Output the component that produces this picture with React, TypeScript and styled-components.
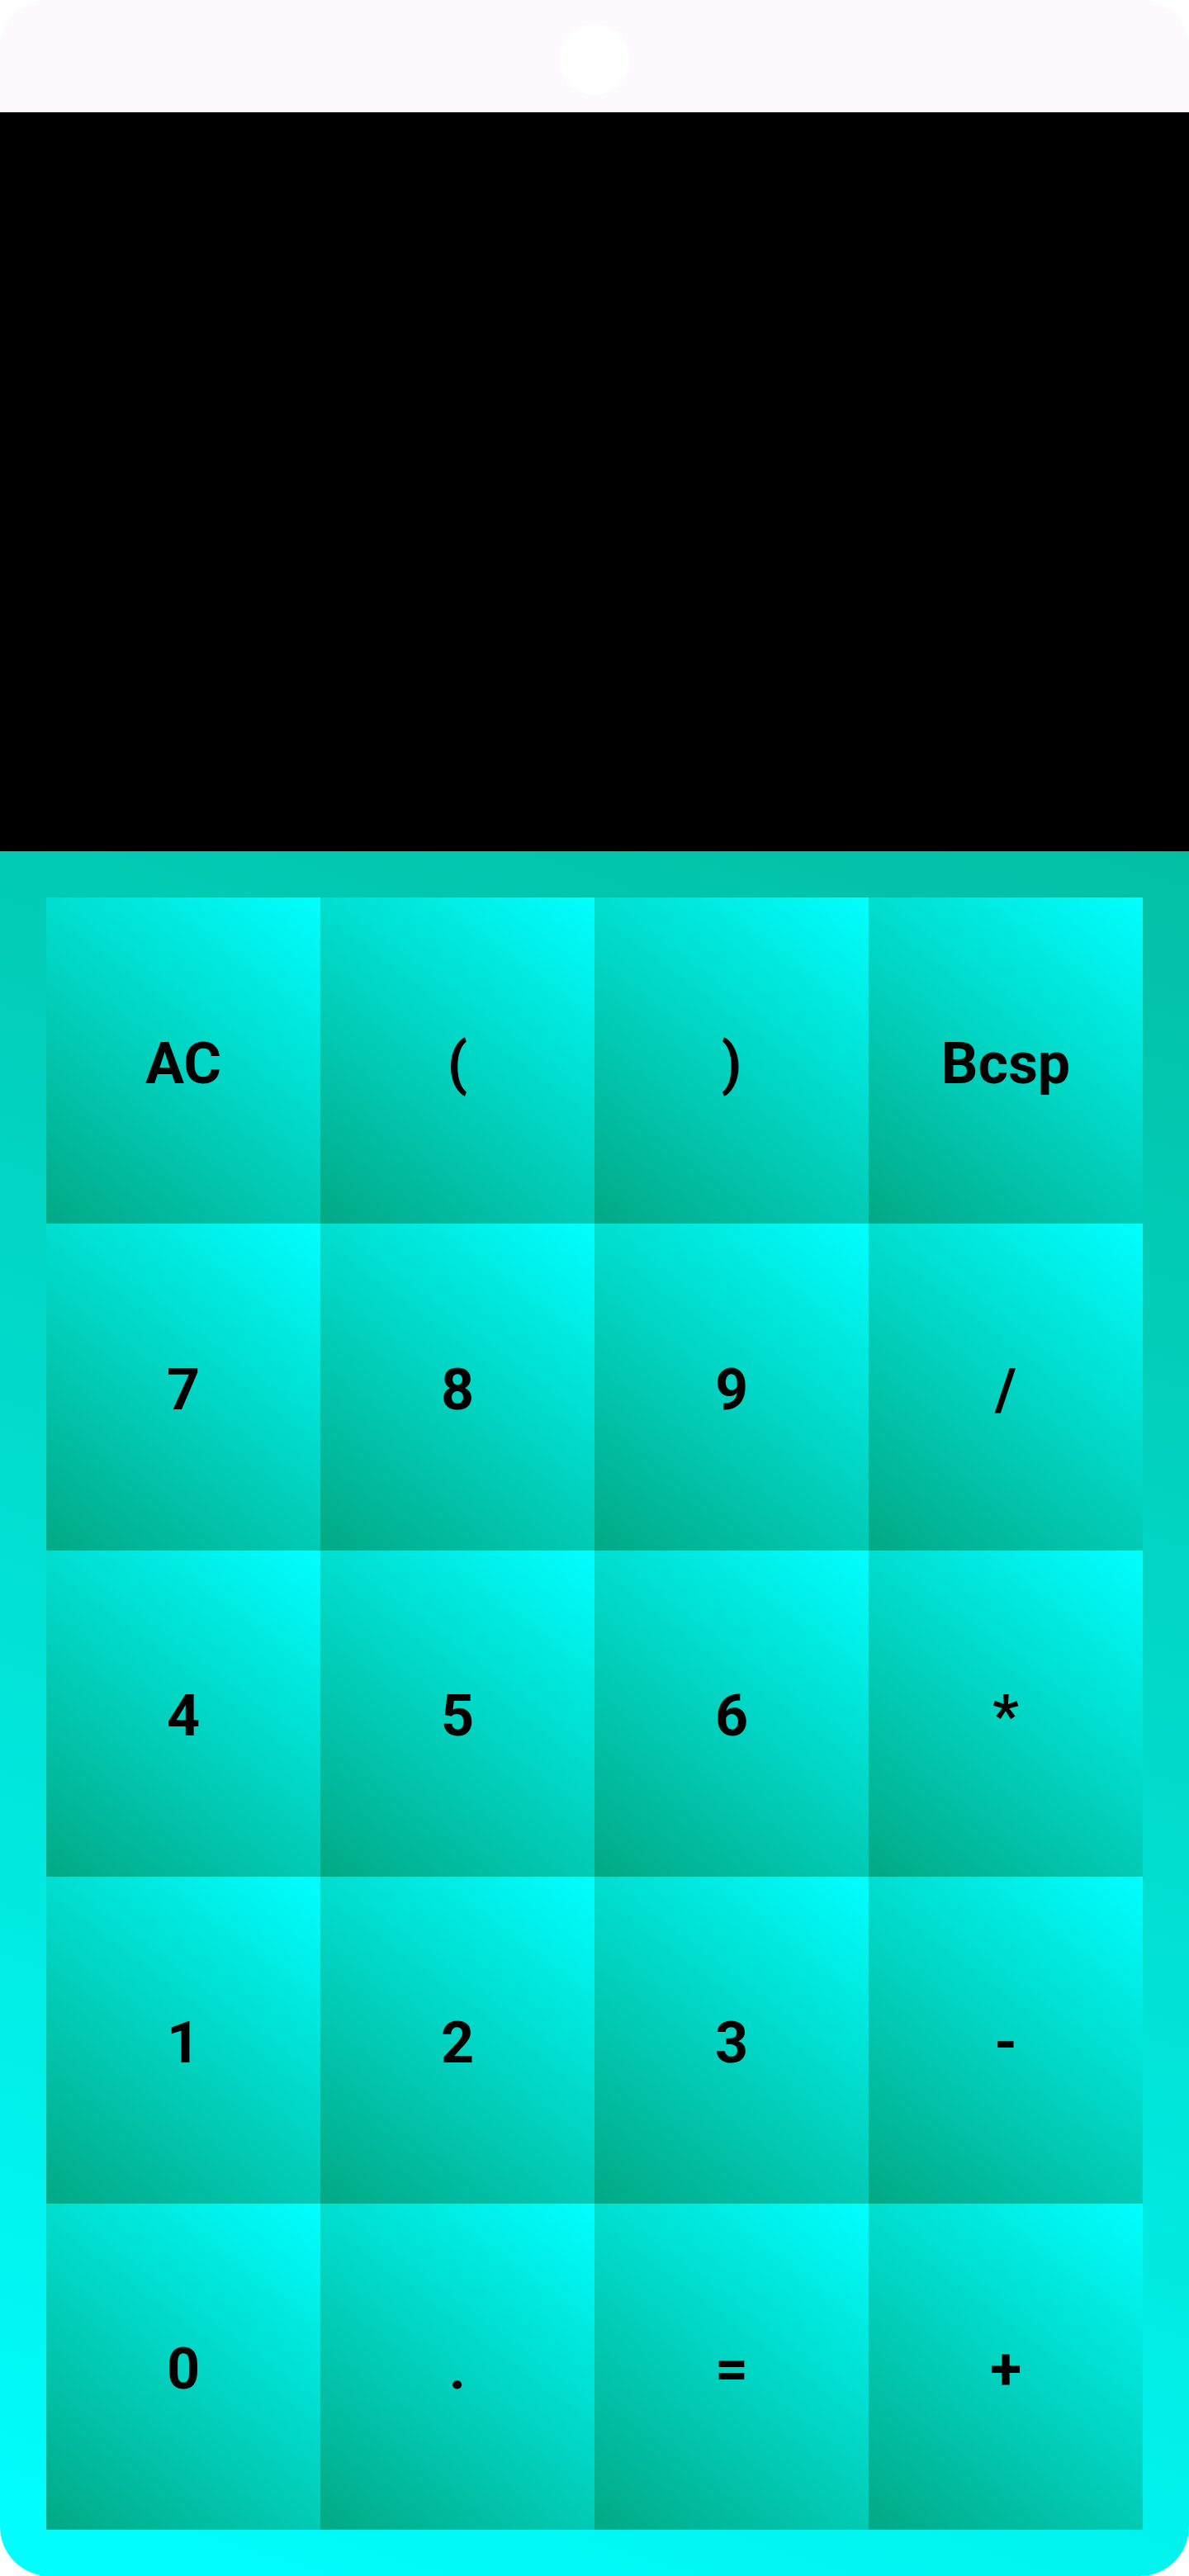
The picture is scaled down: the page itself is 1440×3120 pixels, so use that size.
import React from "react";
import styled, { createGlobalStyle } from "styled-components";

const GlobalStyle = createGlobalStyle`
  html, body {
    margin: 0;
    padding: 0;
    background: #ffffff;
    overflow: hidden;
  }
  * { box-sizing: border-box; }
`;

const Phone = styled.div`
  display: flex;
  flex-direction: column;
  width: 100%;
  height: 3120px;
`;

const StatusBar = styled.div`
  height: 136px;
  flex: 0 0 136px;
  background: #fdf9fd;
  border-radius: 58px 58px 0 0;
  display: flex;
  justify-content: center;
  align-items: flex-start;
  padding-top: 29px;
`;

const Camera = styled.div`
  width: 86px;
  height: 86px;
  border-radius: 50%;
  background: #ffffff;
`;

const Display = styled.div`
  flex: 0 0 895px;
  background: #000000;
`;

const Keypad = styled.div`
  flex: 1;
  padding: 56px;
  background: linear-gradient(18deg, #00ffff 0%, #02bfa4 100%);
  border-radius: 0 0 60px 60px;
  display: grid;
  grid-template-columns: repeat(4, 1fr);
  grid-template-rows: repeat(5, 1fr);
`;

const Key = styled.button`
  border: none;
  margin: 0;
  padding: 6px 0 0 0;
  outline: none;
  background: linear-gradient(37deg, #02a985 0%, #00ffff 100%);
  color: #000000;
  font-family: Roboto, "Liberation Sans", sans-serif;
  font-weight: 700;
  font-size: 70px;
  display: flex;
  align-items: center;
  justify-content: center;
  cursor: pointer;
`;

const keys = [
  "AC", "(", ")", "Bcsp",
  "7", "8", "9", "/",
  "4", "5", "6", "*",
  "1", "2", "3", "-",
  "0", ".", "=", "+",
];

export default function App() {
  return (
    <>
      <GlobalStyle />
      <Phone>
        <StatusBar>
          <Camera />
        </StatusBar>
        <Display />
        <Keypad>
          {keys.map((k) => (
            <Key key={k}>{k}</Key>
          ))}
        </Keypad>
      </Phone>
    </>
  );
}
